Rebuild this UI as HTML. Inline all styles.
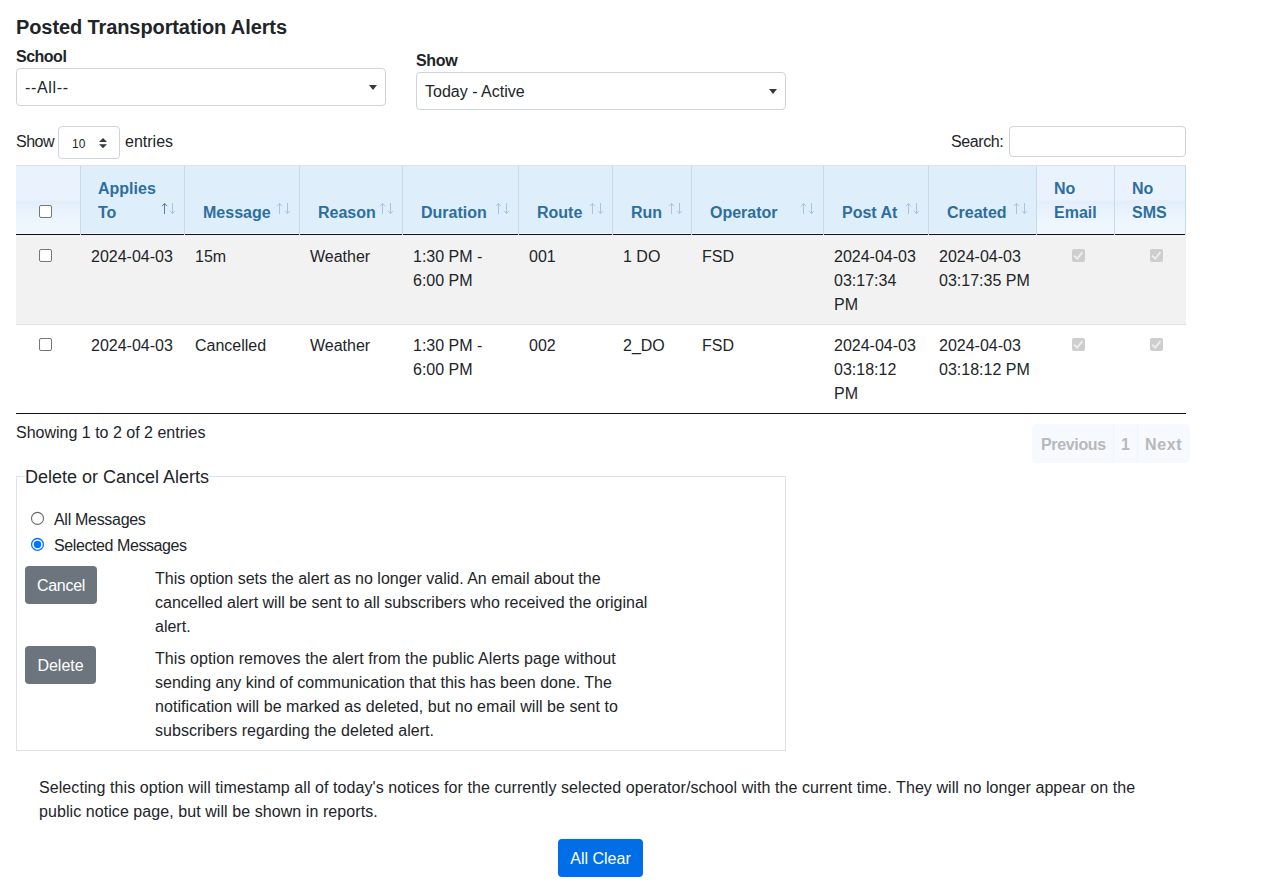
<!DOCTYPE html><html><head><meta charset="utf-8"><title>Posted Transportation Alerts</title><style>
*{box-sizing:border-box;}
html,body{margin:0;padding:0;background:#fff;}
body{font-family:"Liberation Sans",sans-serif;font-size:16px;line-height:24px;color:#212529;width:1275px;height:887px;overflow:hidden;position:relative;}
div,span{position:absolute;white-space:nowrap;}
.b{font-weight:bold;}
.sel{border:1px solid #ced4da;border-radius:4px;background:#fff;}
.caret{width:0;height:0;border-left:4px solid transparent;border-right:4px solid transparent;border-top:5px solid #343a40;}
.th{top:166px;height:67px;background:#dfeefb;}
.thl{top:166px;height:67px;background:linear-gradient(#e9f3fd 0,#eaf3fd 34px,#e2eefb 35px,#e9f3fd 45px,#eef6fe 58px,#eff6fe 67px);}
.vl{width:1px;background:#c5dbec;}
.ht{color:#2e6e9e;font-weight:bold;}
.cb{width:13px;height:13px;border:1px solid #767676;border-radius:2px;background:#fff;}
.cbd{width:13px;height:13px;border-radius:2px;background:#cecece;}
.btn{color:#fff;border-radius:4px;text-align:center;padding-top:1px;}
</style></head><body>
<div class="b" style="left:16px;top:15px;font-size:20px;letter-spacing:-0.1px;">Posted Transportation Alerts</div>
<div class="b" style="left:16px;top:45px;letter-spacing:-0.5px;">School</div>
<div class="sel" style="left:16px;top:68px;width:370px;height:38px;"><span style="left:8px;top:7px;letter-spacing:0.65px;">--All--</span><span class="caret" style="left:352px;top:16px;"></span></div>
<div class="b" style="left:416px;top:49px;letter-spacing:-0.35px;">Show</div>
<div class="sel" style="left:416px;top:72px;width:370px;height:38px;"><span style="left:8px;top:7px;">Today - Active</span><span class="caret" style="left:352px;top:16px;"></span></div>
<div style="left:16px;top:130px;letter-spacing:-0.5px;">Show</div>
<div class="sel" style="left:58px;top:126px;width:62px;height:33px;"><span style="left:13px;top:9px;font-size:12px;line-height:16px;">10</span><svg style="position:absolute;left:39px;top:11px;" width="10" height="11" viewBox="0 0 10 11"><path d="M1 4 L5 0 L9 4Z M1 6.2 L5 10.2 L9 6.2Z" fill="#343a40"/></svg></div>
<div style="left:125px;top:130px;">entries</div>
<div style="left:951px;top:130px;letter-spacing:-0.4px;">Search:</div>
<div class="sel" style="left:1009px;top:126px;width:177px;height:31px;"></div>
<div style="left:16px;top:165px;width:1170px;height:1px;background:#dee2e6;"></div>
<div class="thl" style="left:16px;width:64px;"></div>
<div class="th" style="left:80px;width:104px;"></div>
<div class="th" style="left:184px;width:115px;"></div>
<div class="th" style="left:299px;width:103px;"></div>
<div class="th" style="left:402px;width:116px;"></div>
<div class="th" style="left:518px;width:94px;"></div>
<div class="th" style="left:612px;width:79px;"></div>
<div class="th" style="left:691px;width:132px;"></div>
<div class="th" style="left:823px;width:105px;"></div>
<div class="th" style="left:928px;width:108px;"></div>
<div class="thl" style="left:1036px;width:78px;"></div>
<div class="thl" style="left:1114px;width:71px;"></div>
<div style="left:16px;top:233px;width:1170px;height:1px;background:#f4faff;"></div>
<div style="left:16px;top:234px;width:1170px;height:1px;background:#111;"></div>
<div class="vl" style="left:80px;top:166px;height:69px;"></div>
<div class="vl" style="left:184px;top:166px;height:69px;"></div>
<div class="vl" style="left:299px;top:166px;height:69px;"></div>
<div class="vl" style="left:402px;top:166px;height:69px;"></div>
<div class="vl" style="left:518px;top:166px;height:69px;"></div>
<div class="vl" style="left:612px;top:166px;height:69px;"></div>
<div class="vl" style="left:691px;top:166px;height:69px;"></div>
<div class="vl" style="left:823px;top:166px;height:69px;"></div>
<div class="vl" style="left:928px;top:166px;height:69px;"></div>
<div class="vl" style="left:1036px;top:166px;height:69px;"></div>
<div class="vl" style="left:1114px;top:166px;height:69px;"></div>
<div class="vl" style="left:1185px;top:166px;height:69px;"></div>
<div class="ht" style="left:98px;top:177px;">Applies</div>
<div class="ht" style="left:98px;top:201px;">To</div>
<svg style="position:absolute;left:161px;top:202px;" width="14" height="13" viewBox="0 0 14 13"><path d="M3.5 1.5 V12 M1 4.2 L3.5 1.4 L6 4.2" stroke="#4f82ad" stroke-width="1" fill="none"/><path d="M11.5 1 V11.5 M9 8.8 L11.5 11.6 L14 8.8" stroke="#a7c5e0" stroke-width="1" fill="none"/></svg>
<div class="ht" style="left:203px;top:201px;">Message</div>
<svg style="position:absolute;left:276px;top:202px;" width="14" height="13" viewBox="0 0 14 13"><path d="M3.5 1.5 V12 M1 4.2 L3.5 1.4 L6 4.2" stroke="#a7c5e0" stroke-width="1" fill="none"/><path d="M11.5 1 V11.5 M9 8.8 L11.5 11.6 L14 8.8" stroke="#a7c5e0" stroke-width="1" fill="none"/></svg>
<div class="ht" style="left:318px;top:201px;">Reason</div>
<svg style="position:absolute;left:379px;top:202px;" width="14" height="13" viewBox="0 0 14 13"><path d="M3.5 1.5 V12 M1 4.2 L3.5 1.4 L6 4.2" stroke="#a7c5e0" stroke-width="1" fill="none"/><path d="M11.5 1 V11.5 M9 8.8 L11.5 11.6 L14 8.8" stroke="#a7c5e0" stroke-width="1" fill="none"/></svg>
<div class="ht" style="left:421px;top:201px;">Duration</div>
<svg style="position:absolute;left:495px;top:202px;" width="14" height="13" viewBox="0 0 14 13"><path d="M3.5 1.5 V12 M1 4.2 L3.5 1.4 L6 4.2" stroke="#a7c5e0" stroke-width="1" fill="none"/><path d="M11.5 1 V11.5 M9 8.8 L11.5 11.6 L14 8.8" stroke="#a7c5e0" stroke-width="1" fill="none"/></svg>
<div class="ht" style="left:537px;top:201px;">Route</div>
<svg style="position:absolute;left:589px;top:202px;" width="14" height="13" viewBox="0 0 14 13"><path d="M3.5 1.5 V12 M1 4.2 L3.5 1.4 L6 4.2" stroke="#a7c5e0" stroke-width="1" fill="none"/><path d="M11.5 1 V11.5 M9 8.8 L11.5 11.6 L14 8.8" stroke="#a7c5e0" stroke-width="1" fill="none"/></svg>
<div class="ht" style="left:631px;top:201px;">Run</div>
<svg style="position:absolute;left:668px;top:202px;" width="14" height="13" viewBox="0 0 14 13"><path d="M3.5 1.5 V12 M1 4.2 L3.5 1.4 L6 4.2" stroke="#a7c5e0" stroke-width="1" fill="none"/><path d="M11.5 1 V11.5 M9 8.8 L11.5 11.6 L14 8.8" stroke="#a7c5e0" stroke-width="1" fill="none"/></svg>
<div class="ht" style="left:710px;top:201px;">Operator</div>
<svg style="position:absolute;left:800px;top:202px;" width="14" height="13" viewBox="0 0 14 13"><path d="M3.5 1.5 V12 M1 4.2 L3.5 1.4 L6 4.2" stroke="#a7c5e0" stroke-width="1" fill="none"/><path d="M11.5 1 V11.5 M9 8.8 L11.5 11.6 L14 8.8" stroke="#a7c5e0" stroke-width="1" fill="none"/></svg>
<div class="ht" style="left:842px;top:201px;">Post At</div>
<svg style="position:absolute;left:905px;top:202px;" width="14" height="13" viewBox="0 0 14 13"><path d="M3.5 1.5 V12 M1 4.2 L3.5 1.4 L6 4.2" stroke="#a7c5e0" stroke-width="1" fill="none"/><path d="M11.5 1 V11.5 M9 8.8 L11.5 11.6 L14 8.8" stroke="#a7c5e0" stroke-width="1" fill="none"/></svg>
<div class="ht" style="left:947px;top:201px;">Created</div>
<svg style="position:absolute;left:1013px;top:202px;" width="14" height="13" viewBox="0 0 14 13"><path d="M3.5 1.5 V12 M1 4.2 L3.5 1.4 L6 4.2" stroke="#a7c5e0" stroke-width="1" fill="none"/><path d="M11.5 1 V11.5 M9 8.8 L11.5 11.6 L14 8.8" stroke="#a7c5e0" stroke-width="1" fill="none"/></svg>
<div class="ht" style="left:1054px;top:177px;">No</div>
<div class="ht" style="left:1054px;top:201px;">Email</div>
<div class="ht" style="left:1132px;top:177px;">No</div>
<div class="ht" style="left:1132px;top:201px;">SMS</div>
<div class="cb" style="left:39px;top:205px;"></div>
<div style="left:16px;top:235px;width:1170px;height:89px;background:#f2f2f2;"></div>
<div style="left:16px;top:324px;width:1170px;height:1px;background:#dee2e6;"></div>
<div style="left:16px;top:413px;width:1170px;height:1px;background:#111;"></div>
<div class="cb" style="left:39px;top:249px;"></div>
<div style="left:91px;top:245px;">2024-04-03</div>
<div style="left:195px;top:245px;">15m</div>
<div style="left:310px;top:245px;">Weather</div>
<div style="left:413px;top:245px;">1:30 PM -<br>6:00 PM</div>
<div style="left:529px;top:245px;">001</div>
<div style="left:623px;top:245px;">1 DO</div>
<div style="left:702px;top:245px;">FSD</div>
<div style="left:834px;top:245px;">2024-04-03<br>03:17:34<br>PM</div>
<div style="left:939px;top:245px;">2024-04-03<br>03:17:35 PM</div>
<div class="cbd" style="left:1072px;top:249px;"><svg style="position:absolute;left:0;top:0" width="13" height="13" viewBox="0 0 13 13"><path d="M2.2 6.8 L5.3 9.6 L10.4 3.2" stroke="#eeeeee" stroke-width="1.9" fill="none"/></svg></div>
<div class="cbd" style="left:1150px;top:249px;"><svg style="position:absolute;left:0;top:0" width="13" height="13" viewBox="0 0 13 13"><path d="M2.2 6.8 L5.3 9.6 L10.4 3.2" stroke="#eeeeee" stroke-width="1.9" fill="none"/></svg></div>
<div class="cb" style="left:39px;top:338px;"></div>
<div style="left:91px;top:334px;">2024-04-03</div>
<div style="left:195px;top:334px;">Cancelled</div>
<div style="left:310px;top:334px;">Weather</div>
<div style="left:413px;top:334px;">1:30 PM -<br>6:00 PM</div>
<div style="left:529px;top:334px;">002</div>
<div style="left:623px;top:334px;">2_DO</div>
<div style="left:702px;top:334px;">FSD</div>
<div style="left:834px;top:334px;">2024-04-03<br>03:18:12<br>PM</div>
<div style="left:939px;top:334px;">2024-04-03<br>03:18:12 PM</div>
<div class="cbd" style="left:1072px;top:338px;"><svg style="position:absolute;left:0;top:0" width="13" height="13" viewBox="0 0 13 13"><path d="M2.2 6.8 L5.3 9.6 L10.4 3.2" stroke="#eeeeee" stroke-width="1.9" fill="none"/></svg></div>
<div class="cbd" style="left:1150px;top:338px;"><svg style="position:absolute;left:0;top:0" width="13" height="13" viewBox="0 0 13 13"><path d="M2.2 6.8 L5.3 9.6 L10.4 3.2" stroke="#eeeeee" stroke-width="1.9" fill="none"/></svg></div>
<div style="left:16px;top:421px;">Showing 1 to 2 of 2 entries</div>
<div style="left:1032px;top:424px;width:158px;height:39px;border-radius:4px;background:#f6faff;"></div>
<div style="left:1113px;top:424px;width:1px;height:38px;background:#eef5fc;"></div>
<div style="left:1137px;top:424px;width:1px;height:38px;background:#eef5fc;"></div>
<div class="b" style="left:1041px;top:433px;color:#b8b8b8;letter-spacing:-0.35px;">Previous</div>
<div class="b" style="left:1121px;top:433px;color:#b8b8b8;">1</div>
<div class="b" style="left:1145px;top:433px;color:#b8b8b8;letter-spacing:0.6px;">Next</div>
<div style="left:16px;top:476px;width:770px;height:275px;border:1px solid #dee2e6;"></div>
<div style="left:25px;top:464px;padding:0;background:#fff;font-size:18px;line-height:26px;">Delete or Cancel Alerts</div>
<svg style="position:absolute;left:30px;top:511px;" width="15" height="15" viewBox="0 0 15 15"><circle cx="7.5" cy="7.4" r="6" fill="#fff" stroke="#6a6a6a" stroke-width="1.1"/></svg>
<div style="left:54px;top:508px;letter-spacing:-0.3px;">All Messages</div>
<svg style="position:absolute;left:30px;top:537px;" width="15" height="15" viewBox="0 0 15 15"><circle cx="7.5" cy="7.4" r="5.9" fill="#fff" stroke="#0075ff" stroke-width="1.3"/><circle cx="7.5" cy="7.4" r="3.7" fill="#0075ff"/></svg>
<div style="left:54px;top:534px;letter-spacing:-0.41px;">Selected Messages</div>
<div class="btn" style="left:25px;top:566px;width:72px;height:38px;background:#6c757d;line-height:38px;letter-spacing:-0.3px;">Cancel</div>
<div style="left:155px;top:567px;letter-spacing:0px;">This option sets the alert as no longer valid. An email about the</div>
<div style="left:155px;top:591px;letter-spacing:-0.005px;">cancelled alert will be sent to all subscribers who received the original</div>
<div style="left:155px;top:615px;letter-spacing:0px;">alert.</div>
<div class="btn" style="left:25px;top:646px;width:71px;height:38px;background:#6c757d;line-height:38px;">Delete</div>
<div style="left:155px;top:647px;letter-spacing:0.083px;">This option removes the alert from the public Alerts page without</div>
<div style="left:155px;top:671px;letter-spacing:0px;">sending any kind of communication that this has been done. The</div>
<div style="left:155px;top:695px;letter-spacing:0.06px;">notification will be marked as deleted, but no email will be sent to</div>
<div style="left:155px;top:719px;letter-spacing:0.04px;">subscribers regarding the deleted alert.</div>
<div style="left:39px;top:776px;letter-spacing:0.075px;">Selecting this option will timestamp all of today's notices for the currently selected operator/school with the current time. They will no longer appear on the</div>
<div style="left:39px;top:800px;letter-spacing:0.07px;">public notice page, but will be shown in reports.</div>
<div class="btn" style="left:558px;top:839px;width:85px;height:38px;background:#006ee6;line-height:38px;">All Clear</div>
</body></html>
